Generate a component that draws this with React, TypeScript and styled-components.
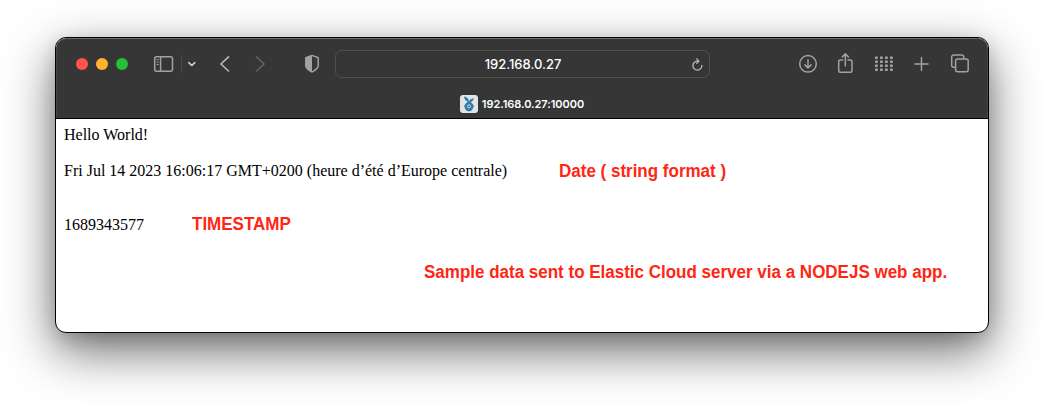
import React from "react";
import styled, { createGlobalStyle } from "styled-components";

const GlobalStyle = createGlobalStyle`
  *, *::before, *::after { box-sizing: border-box; }
  body { margin: 0; background: #fff; overflow: hidden; }
`;

const Desktop = styled.div`
  height: 406px;
  padding: 37px 55px 73px;
  background: #fff;
  overflow: hidden;
`;

const BrowserWindow = styled.main`
  display: flex;
  flex-direction: column;
  height: 296px;
  border: 1px solid #000;
  border-radius: 11px;
  overflow: hidden;
  background: #fff;
  box-shadow: 0 18px 50px rgba(0, 0, 0, 0.58), 0 5px 18px rgba(0, 0, 0, 0.14);
`;

const Chrome = styled.header`
  height: 81px;
  flex: none;
  background: #363636;
  border-bottom: 1px solid #000;
  border-radius: 10px 10px 0 0;
  box-shadow: inset 0 1px 0 #696969, inset 1px 0 0 #464646, inset -1px 0 0 #464646;
  font-family: Inter, "Liberation Sans", sans-serif;
  color: #fff;
`;

const Toolbar = styled.div`
  display: flex;
  align-items: center;
  height: 52px;
  padding-left: 20px;
`;

const Lights = styled.div`
  display: flex;
  gap: 8px;
`;

const Light = styled.span<{ $color: string }>`
  width: 12px;
  height: 12px;
  border-radius: 50%;
  background: ${(p) => p.$color};
`;

const Icon = styled.svg<{ $gap: number; $color?: string }>`
  flex: none;
  margin-left: ${(p) => p.$gap}px;
  fill: none;
  color: ${(p) => p.$color ?? "#a2a2a2"};
  stroke: currentColor;
  stroke-width: 1.5;
  stroke-linecap: round;
  stroke-linejoin: round;
`;

const Divider = styled.span`
  width: 1px;
  height: 18px;
  margin-left: 5px;
  background: #4b4b4b;
`;

const AddressBar = styled.div`
  display: grid;
  grid-template-columns: 24px 1fr 24px;
  align-items: center;
  width: 375px;
  height: 28px;
  margin-left: 13px;
  border: 1px solid #505050;
  border-radius: 7px;
`;

const Address = styled.span`
  grid-column: 2;
  padding-left: 1px;
  text-align: center;
  font-size: 13px;
  line-height: 16px;
  font-weight: 500;
  letter-spacing: -0.02px;
`;

const TabBar = styled.div`
  display: flex;
  align-items: center;
  justify-content: center;
  gap: 4px;
  height: 28px;
`;

const Favicon = styled.svg`
  border-radius: 3px;
  background: #e4e4e4;
`;

const TabTitle = styled.span`
  font-size: 11px;
  line-height: 14px;
  font-weight: 600;
  letter-spacing: -0.05px;
`;

const Page = styled.section`
  padding: 7px 8px 0;
  font-family: "Liberation Serif", serif;
  font-size: 16px;
  line-height: 18px;
  color: #000;
`;

const Line = styled.div<{ $top?: number }>`
  display: flex;
  height: 18px;
  margin-top: ${(p) => p.$top ?? 0}px;
  white-space: pre;
`;

const Note = styled.strong<{ $left: number; $lineHeight?: number }>`
  margin-left: ${(p) => p.$left}px;
  font-family: "Liberation Sans", sans-serif;
  font-size: 18px;
  line-height: ${(p) => p.$lineHeight ?? 18}px;
  font-weight: 700;
  color: #ff2613;
  transform: scaleX(0.944);
  transform-origin: left center;
`;

const Text = styled.span<{ $width?: number }>`
  width: ${(p) => (p.$width ? `${p.$width}px` : "auto")};
`;

const gridColumns = [3.9, 8.9, 13.9, 18.9];
const gridRows = [6, 10, 14, 18];

export default function App() {
  return (
    <Desktop>
      <GlobalStyle />
      <BrowserWindow>
        <Chrome>
          <Toolbar>
            <Lights>
              <Light $color="#ff544d" />
              <Light $color="#ffb429" />
              <Light $color="#25c138" />
            </Lights>
            <Icon $gap={24} width="24" height="24">
              <rect x="2.7" y="4.7" width="17.8" height="14.6" rx="2" />
              <path d="M8.6 4.7v14.6" />
              <path d="M5 7.6h1.4M5 10h1.4M5 12.4h1.4" strokeWidth="1" />
            </Icon>
            <Divider />
            <Icon $gap={4} $color="#d2d2d2" width="12" height="24">
              <path d="m2.8 10.7 3 2.8 3-2.8" strokeWidth="1.6" />
            </Icon>
            <Icon $gap={18} $color="#bababa" width="18" height="24">
              <path d="M12.5 4.8 4.9 12l7.6 7" strokeWidth="1.6" />
            </Icon>
            <Icon $gap={17} $color="#626262" width="18" height="24">
              <path d="m5.5 4.8 7.6 7.2-7.6 7" strokeWidth="1.6" />
            </Icon>
            <Icon $gap={33} width="20" height="24">
              <path d="m10 3.4 6.2 2.4v8c0 3.1-3.3 4.5-6.2 6.2-2.9-1.7-6.2-3.1-6.2-6.2v-8z" />
              <path d="M10 3.4v16.6c-2.9-1.7-6.2-3.1-6.2-6.2v-8z" fill="currentColor" stroke="none" />
            </Icon>
            <AddressBar>
              <Address>192.168.0.27</Address>
              <Icon $gap={0} $color="#bdbdbd" width="24" height="24">
                <path d="M16.9 13.4a4.5 4.5 0 1 1-4.5-4.3h1.4M11.700 6.900l2.200 2.200-2.200 2.300" strokeWidth="1.3" />
              </Icon>
            </AddressBar>
            <Icon $gap={86} width="24" height="24">
              <circle cx="12" cy="11.8" r="8.3" />
              <path d="M12 7.8v8M8.9 12.9l3.1 3 3.1-3" />
            </Icon>
            <Icon $gap={14} width="24" height="24">
              <path d="M8.7 7.9H6.2a1.5 1.5 0 0 0-1.5 1.5v9.3a1.5 1.5 0 0 0 1.5 1.5h10.3a1.5 1.5 0 0 0 1.5-1.5V9.4a1.5 1.5 0 0 0-1.5-1.5H14M11.35 14V2M8.3 4.9l3.05-3.05L14.4 4.9" />
            </Icon>
            <Icon $gap={14} width="24" height="24">
              {gridRows.map((y) =>
                gridColumns.map((x) => (
                  <rect key={`${x}-${y}`} x={x - 0.9} y={y - 1.6} width="2.8" height="2.6" rx=".4" fill="currentColor" stroke="none" />
                ))
              )}
            </Icon>
            <Icon $gap={14} width="24" height="24">
              <path d="M11.5 5.4v13M5 11.9h13" />
            </Icon>
            <Icon $gap={14} width="24" height="24">
              <path d="M6.5 15.2h-.8a2 2 0 0 1-2-2V4.9a2 2 0 0 1 2-2h8a2 2 0 0 1 2 2v1.300" />
              <rect x="7.6" y="6.9" width="12.6" height="12.9" rx="2" />
            </Icon>
          </Toolbar>
          <TabBar>
            <Favicon width="18" height="18" viewBox="0 0 18 18">
              <path d="M4 1.6q4.5.5 5.2 5.400-4.700-.4-5.200-5.400ZM9 7.300q.2-3.300 4.800-4-.8 4.200-4.800 4Z" fill="#347da9" />
              <path d="m9 5.7 5 5-2.2 4.800-2.800 1-2.900-1L4 10.700z" fill="#347da9" />
              <circle cx="9" cy="11.3" r="3.3" fill="#347da9" stroke="#347da9" strokeWidth="2" />
              <circle cx="9" cy="11.3" r="1.5" fill="#347da9" stroke="#c3d9e4" strokeWidth="1" />
            </Favicon>
            <TabTitle>192.168.0.27:10000</TabTitle>
          </TabBar>
        </Chrome>
        <Page>
          <Line>Hello World!</Line>
          <Line $top={18}>
            <Text $width={443}>Fri Jul 14 2023 16:06:17 GMT+0200 (heure d’été d’Europe centrale)</Text>
            <Note $left={52.4}>Date ( string format )</Note>
          </Line>
          <Line $top={36}>
            <Text $width={80}>1689343577</Text>
            <Note $left={48.3} $lineHeight={16}>TIMESTAMP</Note>
          </Line>
          <Line $top={30}>
            <Note $left={360.4} $lineHeight={16}>Sample data sent to Elastic Cloud server via a NODEJS web app.</Note>
          </Line>
        </Page>
      </BrowserWindow>
    </Desktop>
  );
}
